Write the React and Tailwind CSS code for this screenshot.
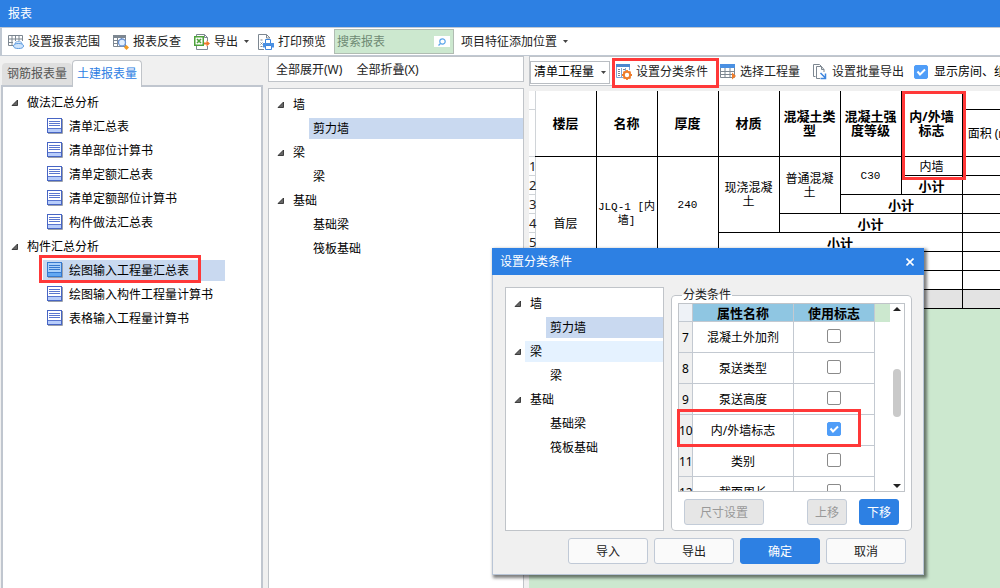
import { useState } from 'react'

const reportTree = [
  { label: '做法汇总分析', children: ['清单汇总表', '清单部位计算书', '清单定额汇总表', '清单定额部位计算书', '构件做法汇总表'] },
  { label: '构件汇总分析', children: ['绘图输入工程量汇总表', '绘图输入构件工程量计算书', '表格输入工程量计算书'] },
]

const componentTree = [
  { label: '墙', children: ['剪力墙'] },
  { label: '梁', children: ['梁'] },
  { label: '基础', children: ['基础梁', '筏板基础'] },
]

const initialProps = [
  { no: 7, name: '混凝土外加剂', used: false },
  { no: 8, name: '泵送类型', used: false },
  { no: 9, name: '泵送高度', used: false },
  { no: 10, name: '内/外墙标志', used: true },
  { no: 11, name: '类别', used: false },
  { no: 12, name: '截面周长', used: false },
]

function Caret({ className = '' }) {
  return (
    <svg className={`h-[3px] w-[5px] shrink-0 ${className}`} viewBox="0 0 5 3">
      <path d="M0 0h5L2.5 3z" fill="#444" />
    </svg>
  )
}

function RangeIcon() {
  return (
    <svg className="h-4 w-4 shrink-0" viewBox="0 0 16 16" fill="none">
      <path d="M.5 1.5h14v10H.5zM.5 5h14M.5 8.5h14M4 1.5v10M7.500 1.500v10M11 1.500v10" stroke="#7d8791" />
      <path d="M5 7h11v8H5z" fill="#fff" />
      <rect x="7" y="7.500" width="7" height="5" rx="2.500" fill="#cfe4fb" stroke="#8db8e8" />
      <ellipse cx="10.500" cy="12" rx="5" ry="2.500" fill="#cfe4fb" stroke="#5c9be0" />
    </svg>
  )
}

function CheckReportIcon() {
  return (
    <svg className="h-4 w-4 shrink-0" viewBox="0 0 16 16" fill="none">
      <path d="M0 1h13v3H0z" fill="#7d8791" />
      <path d="M.5 1.500h12v11H.5zM.5 6.500h12M.5 9.500h12M4.500 4v9M8.500 4v9" stroke="#7d8791" />
      <circle cx="9" cy="8.500" r="3.500" fill="#e3f0fd" stroke="#6b95d6" strokeWidth="1.300" />
      <path d="M13.500 11l2.500 2.500-2.500 2.500-2.500-2.500z" fill="#f39a1f" />
    </svg>
  )
}

function ExportIcon() {
  return (
    <svg className="h-4 w-4 shrink-0" viewBox="0 0 16 16" fill="none">
      <path d="M2.500 3V.5h8l3 3V7M2.500 12v3.500h11V12" stroke="#7d8791" />
      <path d="M10.500 .5v3h3" stroke="#7d8791" />
      <rect x=".75" y="2.750" width="8.500" height="8.500" fill="#fff" stroke="#4ea23c" strokeWidth="1.500" />
      <path d="M3 5l4 4M7 5l-4 4" stroke="#4ea23c" strokeWidth="1.600" />
      <path d="M10 8.500h2.500V6.500L16 9.500l-3.500 3v-2H10z" fill="#f0762a" />
    </svg>
  )
}

function PrintIcon() {
  return (
    <svg className="h-4 w-4 shrink-0" viewBox="0 0 16 16" fill="none">
      <path d="M6 15.500H.5V.5h8l3.500 3.500M8.500 .5V4H12" stroke="#7d8791" />
      <path d="M2.500 6h2M2.500 8.500l2 2M4.500 8.500l-2 2M2.500 12.500h2" stroke="#7d8791" />
      <path d="M7.500 9V5.500h5V9" fill="#fff" stroke="#3f86de" />
      <path d="M5 9h11v4.500H5z" fill="#4a90e2" />
      <path d="M7.500 11.500h6v4h-6z" fill="#fff" stroke="#3f86de" />
    </svg>
  )
}

function ClassifyIcon() {
  return (
    <svg className="h-4 w-4 shrink-0" viewBox="0 0 16 16" fill="none">
      <path d="M.5 1v12.500H7M13.500 1v5M5.500 4v9M9.500 4v3" stroke="#7fa6d6" />
      <path d="M0 0h14v3H0z" fill="#4a87cf" />
      <path d="M2 5.500h2M2 7.500h2M2 9.500h2M2 11.500h2M7 5.500h2" stroke="#7d8791" />
      <circle cx="11" cy="11" r="3.200" stroke="#ef7d2c" strokeWidth="2" fill="#fff" />
      <path d="M11 6v2M11 14v2M6 11h1.500M14.500 11H16M7.500 7.500l1 1M13.500 13.500l1 1M14.500 7.500l-1 1M7.500 14.500l1-1" stroke="#ef7d2c" strokeWidth="1.800" />
    </svg>
  )
}

function PickIcon() {
  return (
    <svg className="h-4 w-4 shrink-0" viewBox="0 0 16 16" fill="none">
      <path d="M.5 4v9.500h14V4M.5 7.500h14M.5 10.500h14M5 4v9.500M10 4v9.500" stroke="#7d8791" />
      <path d="M0 0h15v4H0z" fill="#4a90e2" />
      <path d="M12 8.500l4 3.500-4 3.500z" fill="#ef7d2c" />
    </svg>
  )
}

function BatchIcon() {
  return (
    <svg className="h-4 w-4 shrink-0" viewBox="0 0 16 16" fill="none">
      <path d="M3.500 12.500h-2V.5h6l2 2" stroke="#7d8791" />
      <path d="M8 14.500H4.500v-12h5l2.500 3V8M9.500 2.500v3H12" stroke="#7d8791" />
      <path d="M8.500 9l4.500 4.500M13.500 9.500v5h-5" stroke="#3f86de" strokeWidth="1.500" />
    </svg>
  )
}

function ReportIcon({ active }) {
  return (
    <svg className="mr-1.5 h-4 w-4 shrink-0" viewBox="0 0 16 16" fill="none">
      <path d="M1 15.500h14.500V1" stroke="#9aa0ab" />
      <rect x=".5" y=".5" width="14" height="14" fill={active ? '#a9d0fa' : '#fff'} stroke={active ? '#3579cf' : '#4765c4'} />
      <path d="M1 10h13v4H1z" fill={active ? '#63a8f2' : '#b8cdfb'} />
      <path d="M2 3.500h11M2 5.500h11M2 7.500h11M1 10.500h13" stroke={active ? '#3579cf' : '#5a76cf'} />
    </svg>
  )
}

function ToolButton({ icon, children, dropdown, marked }) {
  return (
    <button className={`relative flex h-6 shrink-0 items-center gap-1 rounded-sm pl-1.5 text-[#222] hover:bg-gray-100 ${dropdown ? 'pr-0.5' : 'pr-1.5'}`}>
      {icon}
      <span>{children}</span>
      {dropdown && <Caret className="ml-0.5" />}
      {marked && <Mark className="-bottom-1 -right-[5px] -top-0.5 left-0.5" />}
    </button>
  )
}

// red highlight frame, placed by the caller
function Mark({ className }) {
  return <span className={`pointer-events-none absolute z-10 border-3 border-[#ff3838] ${className}`} />
}

function Tree({ groups, selected, hovered, icons, marked, onSelect }) {
  return (
    <ul className={`pt-[3px] text-black ${icons ? 'w-fit' : ''}`}>
      {groups.map((g) => (
        <li key={g.label}>
          <div className="flex h-6 items-center">
            <svg className="ml-2 mr-2 h-[7px] w-[7px] shrink-0" viewBox="0 0 7 7">
              <path d="M6.500 1v5.500H1z" fill="#666" stroke="#222" strokeWidth=".8" />
            </svg>
            <span className={`-ml-1 flex h-[21px] flex-1 items-center pl-[5px] pt-0.5 ${hovered === g.label ? 'bg-[#e5f2ff]' : ''}`}>{g.label}</span>
          </div>
          <ul>
            {g.children.map((name) => {
              const active = name === selected
              return (
                <li key={name} className="flex h-6 items-center pl-10">
                  <button
                    onClick={() => onSelect(name)}
                    className={`flex h-[21px] flex-1 items-center pl-1 pr-3 ${active ? 'bg-[#c9d9f0]' : ''}`}
                  >
                    <span className="relative flex h-6 items-center">
                      {icons && <ReportIcon active={active} />}
                      <span className="pt-0.5">{name}</span>
                      {marked && active && <Mark className="-bottom-px -left-2 -right-3 -top-[3px]" />}
                    </span>
                  </button>
                </li>
              )
            })}
          </ul>
        </li>
      ))}
    </ul>
  )
}

function Tick({ className = '', ...props }) {
  return (
    <span className={`relative flex h-3.5 w-3.5 shrink-0 ${className}`}>
      <input type="checkbox" className="peer h-3.5 w-3.5 appearance-none rounded-[2px] border border-[#8a8a8a] bg-white checked:border-[#4f9df8] checked:bg-[#4f9df8]" {...props} />
      <svg className="pointer-events-none absolute inset-0 hidden h-3.5 w-3.5 peer-checked:block" viewBox="0 0 14 14" fill="none">
        <path d="M3.500 6.500l2.500 3 5-5" stroke="#fff" strokeWidth="2" />
      </svg>
    </span>
  )
}

function Gutter({ children }) {
  return <td className="border-r border-b border-[#d0d4d8] bg-white text-[13px] leading-4 text-[#222]">{children}</td>
}

function QuantityTable() {
  const head = 'border border-t-0 border-black text-[13px] leading-[14px] font-bold'
  const cell = 'border border-black pt-0.5 text-center'
  const mono = "font-['Liberation_Mono','Noto_Sans_CJK_SC',monospace] text-[11px]"
  const sum = 'border border-black pt-0.5 text-center text-[13px] font-bold'
  return (
    <table className="w-[494px] table-fixed border-collapse bg-white leading-[14px] text-black">
      <colgroup>
        <col className="w-[6px]" />
        <col span={8} className="w-[61px]" />
      </colgroup>
      <thead>
        <tr className="h-[18px]">
          <Gutter />
          <th rowSpan={2} className={`${head} border-l-0`}>楼层</th>
          <th rowSpan={2} className={head}>名称</th>
          <th rowSpan={2} className={head}>厚度</th>
          <th rowSpan={2} className={head}>材质</th>
          <th rowSpan={2} className={head}>混凝土类<br />型</th>
          <th rowSpan={2} className={head}>混凝土强<br />度等级</th>
          <th rowSpan={2} className={`${head} relative`}>
            内/外墙<br />标志
            <Mark className="left-0 top-0 h-[89px] w-16" />
          </th>
          <th className={head} />
        </tr>
        <tr className="h-[47px]">
          <Gutter />
          <th className="border border-black pt-0.5 font-normal whitespace-nowrap">面积 (m²)</th>
        </tr>
      </thead>
      <tbody>
        <tr className="h-[19px]">
          <Gutter>1</Gutter>
          <td rowSpan={7} className={`${cell} border-l-0`}>首层</td>
          <td rowSpan={6} className={`${cell} ${mono}`}>JLQ-1 [内<br />墙]</td>
          <td rowSpan={5} className={`${cell} ${mono}`}>240</td>
          <td rowSpan={4} className={cell}>现浇混凝<br />土</td>
          <td rowSpan={3} className={cell}>普通混凝<br />土</td>
          <td rowSpan={2} className={`${cell} ${mono}`}>C30</td>
          <td className={cell}>内墙</td>
          <td className={cell} />
        </tr>
        {[1, 2, 3, 4, 5, 6].map((span) => (
          <tr key={span} className="h-[19px]">
            <Gutter>{span + 1}</Gutter>
            <td colSpan={span} className={sum}>小计</td>
            <td className={cell} />
          </tr>
        ))}
        <tr className="h-[19px] bg-[#e3e3e3]">
          <Gutter>8</Gutter>
          <td colSpan={7} className={`${sum} border-l-0`}>合计</td>
          <td className={cell} />
        </tr>
      </tbody>
    </table>
  )
}

function DialogButton({ primary, small, disabled, children, onClick }) {
  const tone = primary
    ? 'border-[#2d80e3] bg-[#2d80e3] text-white'
    : disabled
      ? 'border-[#c3ccd8] bg-[#e6e6e6] text-[#999]'
      : 'border-[#c0c9d6] bg-[#fafafa] text-[#222]'
  return (
    <button disabled={disabled} onClick={onClick} className={`h-[26px] rounded-[3px] border pt-0.5 ${small ? 'w-10' : 'w-20'} ${tone}`}>
      {children}
    </button>
  )
}

function ClassifyDialog({ onClose }) {
  const [selected, setSelected] = useState('剪力墙')
  const [rows, setRows] = useState(initialProps)

  const toggle = (no) => setRows(rows.map((r) => (r.no === no ? { ...r, used: !r.used } : r)))

  return (
    <div role="dialog" aria-label="设置分类条件" className="absolute left-[492px] top-[248px] z-20 w-[432px] border-x border-b border-[#b9c5d6] bg-[#f0f0f0] shadow-[2px_2px_3px_1px_rgba(0,0,0,0.5)]">
      <div className="-mx-px flex h-[27px] items-center justify-between bg-[#2d80e3] pl-2 pr-2.5 text-white">
        <span>设置分类条件</span>
        <button aria-label="关闭" onClick={onClose}>
          <svg className="h-2 w-2" viewBox="0 0 8 8"><path d="M0.500 0.500l7 7M7.500 0.500l-7 7" stroke="#fff" strokeWidth="1.600" /></svg>
        </button>
      </div>

      <div className="flex h-64 gap-[7px] pl-3 pr-[11px] pt-3">
        <div className="w-[159px] shrink-0 border border-[#c0c4c9] bg-white">
          <Tree groups={componentTree} selected={selected} hovered="梁" onSelect={setSelected} />
        </div>

        <fieldset className="relative min-w-0 flex-1 rounded border border-[#c0c4c9] bg-white px-1.5">
          <legend className="ml-1 px-px leading-4">分类条件</legend>
          <div className="flex h-[189px] border border-[#c0c4c9]">
            <div className="flex-1 overflow-hidden">
              <table className="w-full table-fixed border-separate border-spacing-0 text-center text-black">
                <colgroup>
                  <col className="w-3.5" />
                  <col className="w-[101px]" />
                  <col className="w-[81px]" />
                  <col />
                </colgroup>
                <thead>
                  <tr className="h-[18px] text-[13px] leading-4">
                    <th className="border-r border-b border-[#c3c9d1] bg-[#eef2f7]" />
                    <th className="border-r border-b border-[#c3c9d1] bg-[#8fc6e2]">属性名称</th>
                    <th className="border-r border-b border-[#c3c9d1] bg-[#8fc6e2]">使用标志</th>
                    <th className="bg-[#cce8cf]" />
                  </tr>
                </thead>
                <tbody>
                  {rows.map((r) => (
                    <tr key={r.no} className="h-[31px]">
                      <td className="border-r border-b border-[#c3c9d1] bg-[#f0f0f0] pt-0.5">{r.no}</td>
                      <td className="border-r border-b border-[#c3c9d1] pt-0.5">{r.name}</td>
                      <td className="border-r border-b border-[#c3c9d1] pb-0.5">
                        <Tick className="mx-auto" checked={r.used} onChange={() => toggle(r.no)} aria-label={r.name} />
                      </td>
                      <td />
                    </tr>
                  ))}
                </tbody>
              </table>
            </div>
            <div className="flex w-3.5 flex-col items-center py-[3px]">
              <svg className="h-1 w-2" viewBox="0 0 8 4"><path d="M0 4h8L4 0z" fill="#222" /></svg>
              <div className="mt-[58px] h-12 w-2 rounded-full bg-[#c9c9c9]" />
              <svg className="mt-auto h-1 w-2" viewBox="0 0 8 4"><path d="M0 0h8L4 4z" fill="#222" /></svg>
            </div>
          </div>
          <div className="flex items-center gap-3 px-1.5 pt-[7px]">
            <DialogButton disabled>尺寸设置</DialogButton>
            <span className="flex-1" />
            <DialogButton small disabled>上移</DialogButton>
            <DialogButton small primary>下移</DialogButton>
          </div>
          <Mark className="left-[5px] right-[50px] top-[106px] h-[38px]" />
        </fieldset>
      </div>

      <div className="flex justify-end gap-1.5 pb-2.5 pl-3 pr-[17px] pt-[7px]">
        <DialogButton>导入</DialogButton>
        <DialogButton>导出</DialogButton>
        <DialogButton primary onClick={onClose}>确定</DialogButton>
        <DialogButton onClick={onClose}>取消</DialogButton>
      </div>
    </div>
  )
}

export default function App() {
  const [report, setReport] = useState('绘图输入工程量汇总表')
  const [component, setComponent] = useState('剪力墙')
  const [open, setOpen] = useState(true)

  return (
    <div className="relative flex h-screen flex-col overflow-hidden bg-[#f0f0f0] font-['Noto_Sans','Noto_Sans_CJK_SC',sans-serif] text-xs text-[#222]">
      <header className="flex h-[27px] shrink-0 items-center bg-[#2d80e3] px-2 text-white">报表</header>

      {/* 主工具栏 */}
      <div className="flex h-[29px] shrink-0 items-center gap-px border-y border-l-2 border-y-[#c0c8d2] border-l-[#c0c8d2] bg-white">
        <ToolButton icon={<RangeIcon />}>设置报表范围</ToolButton>
        <ToolButton icon={<CheckReportIcon />}>报表反查</ToolButton>
        <ToolButton icon={<ExportIcon />} dropdown>导出</ToolButton>
        <ToolButton icon={<PrintIcon />}>打印预览</ToolButton>
        <div className="relative ml-px flex h-[25px] w-[120px] items-center border border-[#b0bcb2] bg-[#cce8cf]">
          <input aria-label="搜索报表" placeholder="搜索报表" className="w-full bg-transparent px-0.5 placeholder:text-[#6f8a74] focus:outline-none" />
          <button aria-label="搜索" className="mr-[3px] flex h-[11px] w-4 shrink-0 items-center justify-center bg-white">
            <svg className="h-2 w-2" viewBox="0 0 8 8" fill="none">
              <circle cx="4.500" cy="3.500" r="2.700" stroke="#5aa5ea" strokeWidth="1.200" />
              <path d="M2.500 5.500L.5 7.500" stroke="#5aa5ea" strokeWidth="1.200" />
            </svg>
          </button>
        </div>
        <ToolButton dropdown>项目特征添加位置</ToolButton>
      </div>

      <div className="flex min-h-0 flex-1 gap-[5px]">
        {/* 报表列表 */}
        <aside className="flex w-[263px] shrink-0 flex-col pl-px">
          <div className="flex h-[29px] shrink-0 items-end pl-px">
            <button className="h-[22px] w-[70px] rounded-t bg-[#dfdfdf] text-[#555]">钢筋报表量</button>
            <button className="relative z-10 -mb-0.5 h-[27px] w-[70px] rounded-t border border-b-0 border-[#c0c4c9] bg-white text-[#2d80e3]">土建报表量</button>
          </div>
          <div className="flex-1 border-2 border-b-0 border-[#c0c6cf] bg-white">
            <Tree groups={reportTree} selected={report} icons marked onSelect={setReport} />
          </div>
        </aside>

        {/* 构件列表 */}
        <section className="flex w-64 shrink-0 flex-col">
          <div className="flex h-[26px] shrink-0 items-center gap-0.5 border border-[#c0c4c9] bg-white pl-px pt-0.5">
            <ToolButton>全部展开(W)</ToolButton>
            <ToolButton>全部折叠(X)</ToolButton>
          </div>
          <div className="mt-1.5 flex-1 border border-b-0 border-[#c0c4c9] bg-white">
            <Tree groups={componentTree} selected={component} onSelect={setComponent} />
          </div>
        </section>

        {/* 工程量表 */}
        <main className="flex min-w-0 flex-1 flex-col overflow-hidden">
          <div className="flex h-[30px] shrink-0 items-center border-y border-l border-[#c0c4c9] bg-white pt-0.5">
            <div className="relative shrink-0">
              <select aria-label="工程量类型" className="h-[23px] w-20 appearance-none border border-[#b9bdc2] bg-white pl-[3px] text-black">
                <option>清单工程量</option>
                <option>定额工程量</option>
              </select>
              <Caret className="pointer-events-none absolute right-1 top-[10px]" />
            </div>
            <ToolButton icon={<ClassifyIcon />} marked>设置分类条件</ToolButton>
            <ToolButton icon={<PickIcon />}>选择工程量</ToolButton>
            <ToolButton icon={<BatchIcon />}>设置批量导出</ToolButton>
            <label className="ml-1 flex shrink-0 items-center gap-1.5 whitespace-nowrap text-black">
              <Tick defaultChecked />
              显示房间、组合构件量
            </label>
          </div>
          <div className="mt-[5px] flex-1 overflow-hidden bg-[#cce8cf]">
            <QuantityTable />
          </div>
        </main>
      </div>

      {open && <ClassifyDialog onClose={() => setOpen(false)} />}
    </div>
  )
}
